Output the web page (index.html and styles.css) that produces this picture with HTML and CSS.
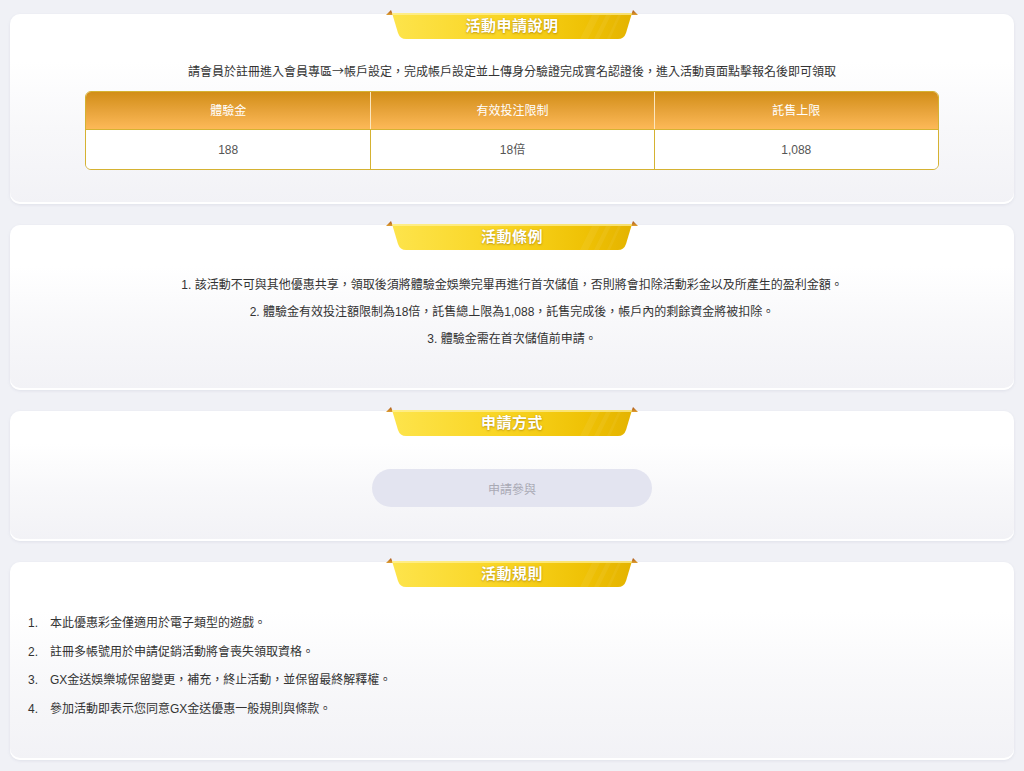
FILE: index.html
```html
<!DOCTYPE html>
<html lang="zh-Hant">
<head>
<meta charset="utf-8">
<title>活動申請</title>
<link rel="stylesheet" href="styles.css">
</head>
<body>
  <section class="card card-intro">
    <div class="ribbon">
      <svg class="ribbon-bg" viewBox="0 0 252 30" width="252" height="30" aria-hidden="true">
        <defs>
          <linearGradient id="rb1" x1="0" y1="0" x2="1" y2="0">
            <stop offset="0" stop-color="#fde44c"/>
            <stop offset="0.45" stop-color="#f9d523"/>
            <stop offset="0.8" stop-color="#efc205"/>
            <stop offset="1" stop-color="#e4b300"/>
          </linearGradient>
          <linearGradient id="rbFold" x1="0" y1="0" x2="0" y2="1">
            <stop offset="0" stop-color="#a8531a"/>
            <stop offset="1" stop-color="#e0a030"/>
          </linearGradient>
        </defs>
        <polygon points="0,5 5,0 7,5" fill="url(#rbFold)"/>
        <polygon points="252,5 247,0 245,5" fill="url(#rbFold)"/>
        <path d="M6,3 H246 L240,23 Q238,29 232,29 H20 Q14,29 12,23 Z" fill="url(#rb1)"/>
        <path d="M6,3 H246 L245.4,5 H6.6 Z" fill="#fff2a0" opacity="0.7"/>
        <path d="M206,5 L214,5 L202,29 L194,29 Z" fill="#fff" opacity="0.06"/>
        <path d="M220,5 L225,5 L213,29 L208,29 Z" fill="#fff" opacity="0.06"/>
        <path d="M232,5 L235,5 L224,29 L221,29 Z" fill="#fff" opacity="0.05"/>
      </svg>
      <span class="ribbon-text">活動申請說明</span>
    </div>
    <p class="intro-text">請會員於註冊進入會員專區<span class="arrow">→</span>帳戶設定，完成帳戶設定並上傳身分驗證完成實名認證後，進入活動頁面點擊報名後即可領取</p>
    <div class="bonus-table">
      <div class="bt-row bt-head">
        <div class="bt-cell">體驗金</div>
        <div class="bt-cell">有效投注限制</div>
        <div class="bt-cell">託售上限</div>
      </div>
      <div class="bt-row bt-body">
        <div class="bt-cell">188</div>
        <div class="bt-cell">18倍</div>
        <div class="bt-cell">1,088</div>
      </div>
    </div>
  </section>

  <section class="card card-terms">
    <div class="ribbon">
      <svg class="ribbon-bg" viewBox="0 0 252 30" width="252" height="30" aria-hidden="true">
        <polygon points="0,5 5,0 7,5" fill="url(#rbFold)"/>
        <polygon points="252,5 247,0 245,5" fill="url(#rbFold)"/>
        <path d="M6,3 H246 L240,23 Q238,29 232,29 H20 Q14,29 12,23 Z" fill="url(#rb1)"/>
        <path d="M6,3 H246 L245.4,5 H6.6 Z" fill="#fff2a0" opacity="0.7"/>
        <path d="M206,5 L214,5 L202,29 L194,29 Z" fill="#fff" opacity="0.06"/>
        <path d="M220,5 L225,5 L213,29 L208,29 Z" fill="#fff" opacity="0.06"/>
        <path d="M232,5 L235,5 L224,29 L221,29 Z" fill="#fff" opacity="0.05"/>
      </svg>
      <span class="ribbon-text">活動條例</span>
    </div>
    <div class="terms">
      <p>1. 該活動不可與其他優惠共享，領取後須將體驗金娛樂完畢再進行首次儲值，否則將會扣除活動彩金以及所產生的盈利金額。</p>
      <p>2. 體驗金有效投注額限制為18倍，託售總上限為1,088，託售完成後，帳戶內的剩餘資金將被扣除。</p>
      <p>3. 體驗金需在首次儲值前申請。</p>
    </div>
  </section>

  <section class="card card-apply">
    <div class="ribbon">
      <svg class="ribbon-bg" viewBox="0 0 252 30" width="252" height="30" aria-hidden="true">
        <polygon points="0,5 5,0 7,5" fill="url(#rbFold)"/>
        <polygon points="252,5 247,0 245,5" fill="url(#rbFold)"/>
        <path d="M6,3 H246 L240,23 Q238,29 232,29 H20 Q14,29 12,23 Z" fill="url(#rb1)"/>
        <path d="M6,3 H246 L245.4,5 H6.6 Z" fill="#fff2a0" opacity="0.7"/>
        <path d="M206,5 L214,5 L202,29 L194,29 Z" fill="#fff" opacity="0.06"/>
        <path d="M220,5 L225,5 L213,29 L208,29 Z" fill="#fff" opacity="0.06"/>
        <path d="M232,5 L235,5 L224,29 L221,29 Z" fill="#fff" opacity="0.05"/>
      </svg>
      <span class="ribbon-text">申請方式</span>
    </div>
    <button class="apply-btn" type="button" disabled>申請參與</button>
  </section>

  <section class="card card-rules">
    <div class="ribbon">
      <svg class="ribbon-bg" viewBox="0 0 252 30" width="252" height="30" aria-hidden="true">
        <polygon points="0,5 5,0 7,5" fill="url(#rbFold)"/>
        <polygon points="252,5 247,0 245,5" fill="url(#rbFold)"/>
        <path d="M6,3 H246 L240,23 Q238,29 232,29 H20 Q14,29 12,23 Z" fill="url(#rb1)"/>
        <path d="M6,3 H246 L245.4,5 H6.6 Z" fill="#fff2a0" opacity="0.7"/>
        <path d="M206,5 L214,5 L202,29 L194,29 Z" fill="#fff" opacity="0.06"/>
        <path d="M220,5 L225,5 L213,29 L208,29 Z" fill="#fff" opacity="0.06"/>
        <path d="M232,5 L235,5 L224,29 L221,29 Z" fill="#fff" opacity="0.05"/>
      </svg>
      <span class="ribbon-text">活動規則</span>
    </div>
    <ol class="rules">
      <li><span class="num">1.</span><span>本此優惠彩金僅適用於電子類型的遊戲。</span></li>
      <li><span class="num">2.</span><span>註冊多帳號用於申請促銷活動將會喪失領取資格。</span></li>
      <li><span class="num">3.</span><span>GX金送娛樂城保留變更，補充，終止活動，並保留最終解釋權。</span></li>
      <li><span class="num">4.</span><span>參加活動即表示您同意GX金送優惠一般規則與條款。</span></li>
    </ol>
  </section>
</body>
</html>
```

FILE: styles.css
```css
* {
  box-sizing: border-box;
}

html,
body {
  margin: 0;
  padding: 0;
}

body {
  background: #f0f1f6;
  padding: 14px 10px 12px;
  font-family: "Liberation Sans", "Noto Sans CJK TC", Arial, sans-serif;
  font-size: 12px;
  color: #333;
  display: flex;
  flex-direction: column;
  gap: 21px;
}

/* panel */
.card {
  position: relative;
  border-radius: 10px;
  background: linear-gradient(180deg, #ffffff 0%, #ffffff 25%, #f8f8fa 60%, #f2f2f6 100%);
  box-shadow: inset 0 -2px 0 #ffffff, 0 1px 3px rgba(150, 155, 175, 0.18);
  display: flex;
  flex-direction: column;
  align-items: center;
}

/* golden title ribbon hanging over the panel's top edge */
.ribbon {
  position: relative;
  width: 252px;
  height: 30px;
  margin-top: -4px;
  display: flex;
  align-items: center;
  justify-content: center;
  padding-top: 1px;
}

.ribbon-bg {
  position: absolute;
  inset: 0;
  display: block;
}

.ribbon-text {
  position: relative;
  color: #fff;
  font-size: 15px;
  font-weight: bold;
  letter-spacing: 0.5px;
  line-height: 20px;
  text-shadow: 0 1px 2px rgba(150, 110, 0, 0.55), 0 0 1px rgba(150, 110, 0, 0.4);
}

/* intro panel */
.card-intro {
  padding-bottom: 34px;
}

.intro-text {
  margin: 22px 0 0;
  line-height: 20px;
  text-align: center;
  color: #333;
}

.arrow {
  font-family: "Noto Sans CJK TC", sans-serif;
  font-size: 12px;
  line-height: 12px;
}

.bonus-table {
  width: 85%;
  margin-top: 9px;
  border: 1px solid #d5b232;
  border-radius: 6px;
  overflow: hidden;
}

.bt-row {
  display: grid;
  grid-template-columns: 1fr 1fr 1fr;
}

.bt-head {
  height: 38px;
  background: linear-gradient(180deg, #d28e17 0%, #e7a33a 50%, #fdb958 100%);
  color: #fff;
  border-bottom: 1px solid #d5b232;
}

.bt-head .bt-cell + .bt-cell {
  border-left: 1px solid #fbe6bf;
}

.bt-body {
  height: 39px;
  background: #fff;
  color: #555;
}

.bt-body .bt-cell + .bt-cell {
  border-left: 1px solid #d5b232;
}

.bt-cell {
  display: flex;
  align-items: center;
  justify-content: center;
  line-height: 16px;
}

/* terms panel */
.card-terms {
  padding-bottom: 37px;
}

.terms {
  margin-top: 21px;
  text-align: center;
}

.terms p {
  margin: 0;
  line-height: 27px;
  color: #333;
}

/* apply panel */
.card-apply {
  padding-bottom: 34px;
}

.apply-btn {
  margin-top: 32px;
  width: 280px;
  height: 38px;
  border: 0;
  border-radius: 19px;
  background: #e3e4f0;
  color: #a9a9b4;
  font-family: inherit;
  font-size: 12px;
}

/* rules panel */
.card-rules {
  align-items: stretch;
  padding: 0 18px 37px;
}

.card-rules .ribbon {
  align-self: center;
}

.rules {
  list-style: none;
  margin: 21px 0 0;
  padding: 0;
}

.rules li {
  display: grid;
  grid-template-columns: 22px 1fr;
  line-height: 28.5px;
  color: #333;
}
```
